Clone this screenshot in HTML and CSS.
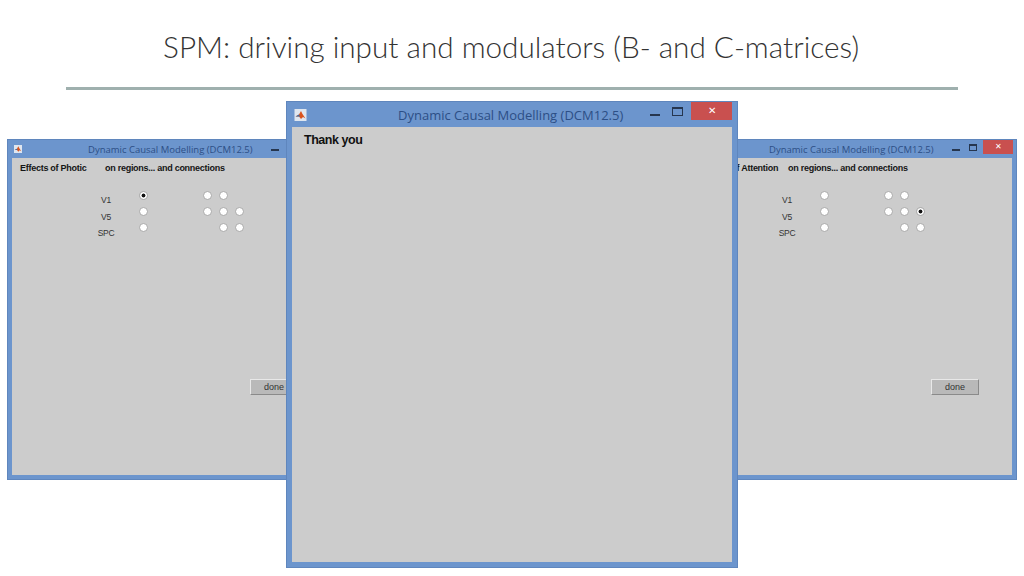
FILE: index.html
```html
<!DOCTYPE html>
<html>
<head>
    <meta charset="UTF-8">
    <title>SPM: driving input and modulators</title>
    <link rel="stylesheet" href="styles.css">
</head>

<body>
<div class="slide">
    <h1 class="tittel">SPM: driving input and modulators (B- and C-matrices)</h1>
    <div class="strek"></div>

    <!--Venstre vindu, hoyre del ligger bak det midtre vinduet-->
    <div class="vindu liten venstre">
        <div class="topplinje">
            <svg class="ikon" viewBox="0 0 12 12"><rect width="12" height="12" fill="#dfe6ef"/><path d="M1 7.5 L4.5 5.5 L6.5 2 L8 5 L11 9.5 L8.5 8 L6.5 10 L4.5 7.5 Z" fill="#d9531e"/><path d="M1 7.5 L4.5 5.5 L5.5 7.5 L4.5 7.5 Z" fill="#3b6ea5"/></svg>
            <span class="vindutittel">Dynamic Causal Modelling (DCM12.5)</span>
            <span class="knapper">
                <span class="min"></span>
                <span class="maks"></span>
                <span class="lukk"></span>
            </span>
        </div>
        <div class="flate">
            <div class="overskrift"><span class="navn">Effects of Photic</span><span>on regions... and connections</span></div>
            <div class="rutenett">
                <span class="etikett">V1</span><i class="radio valgt"></i><i></i><i class="radio"></i><i class="radio"></i><i></i>
                <span class="etikett">V5</span><i class="radio"></i><i></i><i class="radio"></i><i class="radio"></i><i class="radio"></i>
                <span class="etikett">SPC</span><i class="radio"></i><i></i><i></i><i class="radio"></i><i class="radio"></i>
            </div>
            <button class="ferdig">done</button>
        </div>
    </div>

    <!--Hoyre vindu-->
    <div class="vindu liten hoyre">
        <div class="topplinje">
            <svg class="ikon" viewBox="0 0 12 12"><rect width="12" height="12" fill="#dfe6ef"/><path d="M1 7.5 L4.5 5.5 L6.5 2 L8 5 L11 9.5 L8.5 8 L6.5 10 L4.5 7.5 Z" fill="#d9531e"/><path d="M1 7.5 L4.5 5.5 L5.5 7.5 L4.5 7.5 Z" fill="#3b6ea5"/></svg>
            <span class="vindutittel">Dynamic Causal Modelling (DCM12.5)</span>
            <span class="knapper">
                <span class="min"></span>
                <span class="maks"></span>
                <span class="lukk">✕</span>
            </span>
        </div>
        <div class="flate">
            <div class="overskrift"><span class="navn">Effects of Attention</span><span>on regions... and connections</span></div>
            <div class="rutenett">
                <span class="etikett">V1</span><i class="radio"></i><i></i><i class="radio"></i><i class="radio"></i><i></i>
                <span class="etikett">V5</span><i class="radio"></i><i></i><i class="radio"></i><i class="radio"></i><i class="radio valgt"></i>
                <span class="etikett">SPC</span><i class="radio"></i><i></i><i></i><i class="radio"></i><i class="radio"></i>
            </div>
            <button class="ferdig">done</button>
        </div>
    </div>

    <!--Midtre vindu-->
    <div class="vindu stor">
        <div class="topplinje">
            <svg class="ikon" viewBox="0 0 12 12"><rect width="12" height="12" fill="#dfe6ef"/><path d="M1 7.5 L4.5 5.5 L6.5 2 L8 5 L11 9.5 L8.5 8 L6.5 10 L4.5 7.5 Z" fill="#d9531e"/><path d="M1 7.5 L4.5 5.5 L5.5 7.5 L4.5 7.5 Z" fill="#3b6ea5"/></svg>
            <span class="vindutittel">Dynamic Causal Modelling (DCM12.5)</span>
            <span class="knapper">
                <span class="min"></span>
                <span class="maks"></span>
                <span class="lukk">✕</span>
            </span>
        </div>
        <div class="flate">
            <div class="takk">Thank you</div>
        </div>
    </div>
</div>
</body>
</html>
```

FILE: styles.css
```css
body{
    margin: 0;
    background: #ffffff;
    font-family: "Liberation Sans", sans-serif;
}
.slide{
    position: relative;
    width: 1024px;
    height: 576px;
    overflow: hidden;
}
.tittel{
    margin: 0;
    padding: 28px 0 0 163px;
    height: 57px;
    box-sizing: border-box;
    font-family: Lato, sans-serif;
    font-size: 29.7px;
    line-height: 38px;
    font-weight: 300;
    color: #333333;
    white-space: nowrap;
}
.strek{
    margin: 30px 66px 0 66px;
    height: 3px;
    background: #9fb0ae;
}

/* vinduene ligger fritt paa lysbildet */
.vindu{
    position: absolute;
    display: flex;
    flex-direction: column;
    box-sizing: border-box;
    background: #6c95cd;
    border: 1px solid #5f86bd;
}
.liten{
    top: 139px;
    width: 329px;
    height: 341px;
    padding: 0 4px 4px 4px;
}
.venstre{
    left: 7px;
}
.hoyre{
    left: 688px;
}
.stor{
    left: 286px;
    top: 101px;
    width: 452px;
    height: 467px;
    padding: 0 5px 5px 5px;
    z-index: 2;
}
.topplinje{
    display: flex;
    align-items: center;
    height: 18px;
    flex: none;
}
.stor .topplinje{
    height: 25px;
}
.ikon{
    width: 10px;
    height: 8px;
    margin-left: 1px;
}
.stor .ikon{
    width: 13px;
    height: 12px;
    margin-left: 2px;
}
.vindutittel{
    margin-left: 65px;
    font-family: "Open Sans", sans-serif;
    font-size: 9.5px;
    color: #2c4f86;
    white-space: nowrap;
}
.stor .vindutittel{
    margin-left: 91px;
    font-size: 13px;
}
.knapper{
    display: flex;
    align-items: flex-start;
    margin-left: auto;
    align-self: flex-start;
}
.min{
    width: 8px;
    height: 2px;
    margin: 9px 9px 0 0;
    background: #26364f;
}
.maks{
    width: 8px;
    height: 7px;
    box-sizing: border-box;
    margin: 4px 6px 0 0;
    border: 1px solid #26364f;
    border-top-width: 2px;
}
.lukk{
    width: 30px;
    height: 14px;
    margin-right: -1px;
    background: #c9504f;
    color: #ffffff;
    font-size: 8px;
    line-height: 14px;
    text-align: center;
}
.stor .min{
    width: 10px;
    margin: 12px 12px 0 0;
}
.stor .maks{
    width: 11px;
    height: 9px;
    margin: 5px 8px 0 0;
}
.stor .lukk{
    width: 41px;
    height: 18px;
    margin-right: 0;
    font-size: 10px;
    line-height: 18px;
}
.flate{
    position: relative;
    flex: 1;
    background: #cccccc;
    overflow: hidden;
}
.overskrift{
    display: flex;
    padding: 3px 0 0 8px;
    height: 14px;
    font-size: 9px;
    letter-spacing: -0.27px;
    line-height: 14px;
    font-weight: bold;
    color: #151515;
    white-space: nowrap;
}
.navn{
    width: 85px;
}
.hoyre .navn{
    width: 87px;
}
.rutenett{
    display: grid;
    grid-template-columns: 45px 16px 48px 16px 16px 16px;
    grid-auto-rows: 16.4px;
    margin: 12px 0 0 78px;
    justify-items: center;
    align-items: center;
}
.etikett{
    justify-self: start;
    width: 32px;
    transform: translateY(5px);
    font-size: 8.5px;
    letter-spacing: -0.3px;
    line-height: 10px;
    text-align: center;
    color: #333333;
}
.radio{
    width: 9px;
    height: 9px;
    box-sizing: border-box;
    border-radius: 50%;
    background: #ffffff;
    border: 1px solid #a8a8a8;
}
.valgt{
    background: radial-gradient(circle, #111111 0 1.6px, #ffffff 2.3px);
}
.ferdig{
    position: absolute;
    left: 238px;
    top: 221px;
    width: 48px;
    height: 16px;
    padding: 0;
    background: #b9b9b9;
    border: 1px solid;
    border-color: #e8e8e8 #8a8a8a #8a8a8a #e8e8e8;
    font-family: "Liberation Sans", sans-serif;
    font-size: 9px;
    color: #333333;
}
.takk{
    padding: 5px 0 0 12px;
    font-size: 12.5px;
    letter-spacing: -0.45px;
    line-height: 16px;
    font-weight: bold;
    color: #111111;
}
```
